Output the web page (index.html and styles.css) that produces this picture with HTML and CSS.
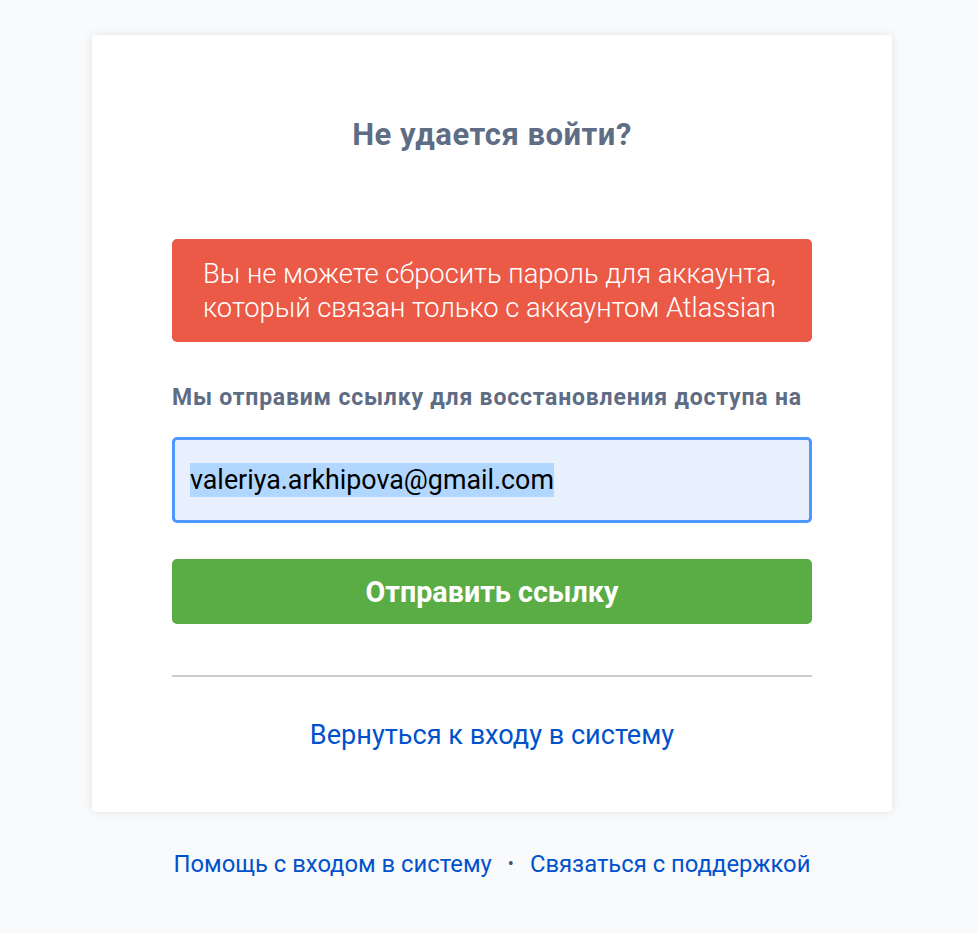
FILE: index.html
```html
<!DOCTYPE html>
<html lang="ru">
<head>
<meta charset="utf-8">
<title>Не удается войти?</title>
<link rel="stylesheet" href="styles.css">
</head>
<body>
<main class="page">
  <section class="card">
    <h1 class="title">Не удается войти?</h1>
    <div class="error">Вы не можете сбросить пароль для аккаунта,<br>который связан только с аккаунтом Atlassian</div>
    <p class="label">Мы отправим ссылку для восстановления доступа на</p>
    <div class="input"><span class="selected">valeriya.arkhipova@gmail.com</span></div>
    <button class="submit" type="button">Отправить ссылку</button>
    <hr class="divider">
    <a class="back" href="#">Вернуться к входу в систему</a>
  </section>
  <nav class="footer">
    <a href="#">Помощь с входом в систему</a>
    <span class="dot">•</span>
    <a href="#">Связаться с поддержкой</a>
  </nav>
</main>
</body>
</html>
```
FILE: styles.css
```css
* { box-sizing: border-box; }
html, body { margin: 0; padding: 0; }
body {
  background: #f9fafc;
  font-family: Roboto, "Noto Sans", "Liberation Sans", sans-serif;
  width: 978px;
  height: 933px;
}
.page {
  display: flex;
  flex-direction: column;
  align-items: center;
  padding-top: 35px;
}
.card {
  width: 800px;
  background: #fff;
  border-radius: 4px;
  box-shadow: 0 0 10px rgba(0, 0, 0, 0.1);
  padding: 79px 80px 60px;
  display: flex;
  flex-direction: column;
  margin-left: 6px;
}
.title {
  margin: 0;
  text-align: center;
  font-size: 31px;
  line-height: 42px;
  font-weight: 700;
  color: #5e6c84;
  letter-spacing: 0.5px;
}
.error {
  margin-top: 83px;
  background: #eb5a46;
  color: #fff;
  border-radius: 5px;
  padding: 18px 20px 17px 31px;
  font-size: 27.3px;
  line-height: 34px;
  font-weight: 300;
  white-space: nowrap;
}
.label {
  margin: 41px 0 0;
  font-size: 23px;
  line-height: 30px;
  font-weight: 700;
  color: #5e6c84;
  letter-spacing: 0.8px;
}
.input {
  margin-top: 24px;
  height: 86px;
  border: 3px solid #4c9aff;
  border-radius: 5px;
  background: #e8f0fe;
  padding: 0 15px;
  display: flex;
  align-items: center;
  font-size: 26.8px;
  color: #000;
}
.selected {
  background: #b2d7ff;
  line-height: 34px;
}
.submit {
  margin-top: 36px;
  height: 65px;
  border: 0;
  border-radius: 5px;
  background: #5aac44;
  color: #fff;
  font-family: inherit;
  font-size: 28.7px;
  font-weight: 700;
}
.divider {
  margin: 51px 0 0;
  border: 0;
  border-top: 2px solid #cccccc;
}
.back {
  margin-top: 41px;
  text-align: center;
  font-size: 27.1px;
  line-height: 34px;
  color: #0052cc;
  text-decoration: none;
}
.footer {
  margin-top: 37px;
  display: flex;
  align-items: center;
  gap: 16px;
  font-size: 23.8px;
  line-height: 30px;
  margin-left: 6px;
}
.footer a { color: #0052cc; text-decoration: none; }
.dot { color: #42526e; font-size: 18px; }
```
